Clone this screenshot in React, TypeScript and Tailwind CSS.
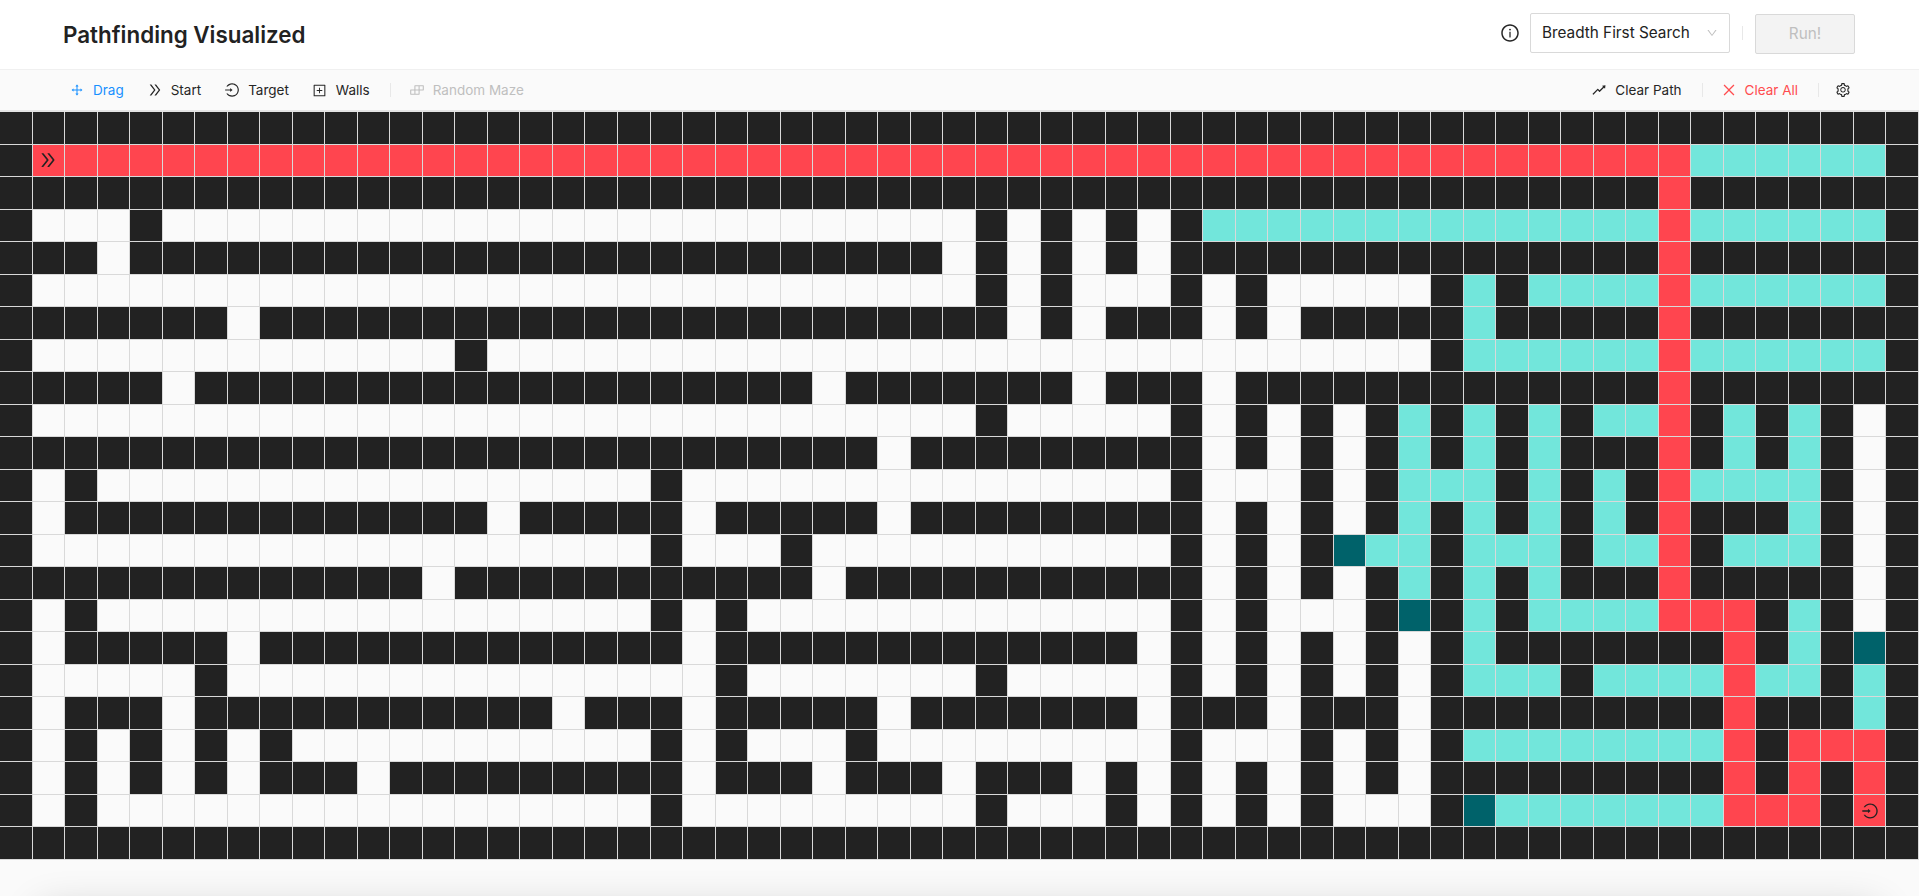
import type { ReactNode } from "react";
import {
  AiOutlineBuild,
  AiOutlineClose,
  AiOutlineDoubleRight,
  AiOutlineDown,
  AiOutlineDrag,
  AiOutlineInfoCircle,
  AiOutlineLogin,
  AiOutlinePlusSquare,
  AiOutlineRise,
  AiOutlineSetting,
} from "react-icons/ai";

// run-length rows: # wall, . empty, r path, t visited, d frontier, S start, E target
const maze = [
  "#59",
  "#1 S1 r50 t6 #1",
  "#51 r1 #7",
  "#1 .3 #1 .25 #1 .1 #1 .1 #1 .1 #1 t14 r1 t6 #1",
  "#3 .1 #25 .1 #1 .1 #1 .1 #1 .1 #15 r1 #7",
  "#1 .29 #1 .1 #1 .3 #1 .1 #1 .5 #1 t1 #1 t4 r1 t6 #1",
  "#7 .1 #23 .1 #1 .1 #3 .1 #1 .1 #5 t1 #5 r1 #7",
  "#1 .13 #1 .29 #1 t6 r1 t6 #1",
  "#5 .1 #19 .1 #7 .1 #3 .1 #13 r1 #7",
  "#1 .29 #1 .5 #1 .1 #1 .1 #1 .1 #1 t1 #1 t1 #1 t1 #1 t2 r1 #1 t1 #1 t1 #1 .1 #1",
  "#27 .1 #9 .1 #1 .1 #1 .1 #1 t1 #1 t1 #1 t1 #3 r1 #1 t1 #1 t1 #1 .1 #1",
  "#1 .1 #1 .17 #1 .15 #1 .3 #1 .1 #1 t3 #1 t1 #1 t1 #1 r1 t4 #1 .1 #1",
  "#1 .1 #13 .1 #5 .1 #5 .1 #9 .1 #1 .1 #1 .1 #1 t1 #1 t1 #1 t1 #1 t1 #1 r1 #3 t1 #1 .1 #1",
  "#1 .19 #1 .3 #1 .11 #1 .1 #1 .1 #1 d1 t2 #1 t3 #1 t2 r1 #1 t3 #1 .1 #1",
  "#13 .1 #11 .1 #11 .1 #1 .1 #1 .1 #1 t1 #1 t1 #1 t1 #3 r1 #5 .1 #1",
  "#1 .1 #1 .17 #1 .1 #1 .13 #1 .1 #1 .3 #1 d1 #1 t1 #1 t4 r3 #1 t1 #1 .1 #1",
  "#1 .1 #5 .1 #13 .1 #13 .1 #1 .1 #1 .1 #1 .1 #1 .1 #1 t1 #7 r1 #1 t1 #1 d1 #1",
  "#1 .5 #1 .15 #1 .7 #1 .5 #1 .1 #1 .1 #1 .1 #1 .1 #1 t3 #1 t4 r1 t2 #1 t1 #1",
  "#1 .1 #3 .1 #11 .1 #3 .1 #5 .1 #7 .1 #3 .1 #3 .1 #9 r1 #3 t1 #1",
  "#1 .1 #1 .1 #1 .1 #1 .1 #1 .11 #1 .1 #1 .3 #1 .9 #1 .3 #1 .1 #1 .1 #1 t8 r1 #1 r3 #1",
  "#1 .1 #1 .1 #1 .1 #1 .1 #3 .1 #9 .1 #3 .1 #3 .1 #3 .1 #1 .1 #1 .1 #1 .1 #1 .1 #1 .1 #9 r1 #1 r1 #1 r1 #1",
  "#1 .1 #1 .17 #1 .9 #1 .3 #1 .1 #1 .1 #1 .1 #1 .3 #1 d1 t7 r3 #1 E1 #1",
  "#59",
];

const cells = maze.flatMap((row) =>
  row.split(" ").flatMap((run) => Array<string>(Number(run.slice(1))).fill(run[0]))
);

const cellColor: Record<string, string> = {
  "#": "bg-[#222222]",
  ".": "bg-[#fafafa]",
  r: "bg-[#ff454f]",
  t: "bg-[#72e6db]",
  d: "bg-[#00626a]",
  S: "bg-[#ff454f]",
  E: "bg-[#ff454f]",
};

function Tool({
  icon,
  label,
  className,
}: {
  icon: ReactNode;
  label: string;
  className?: string;
}) {
  return (
    <div className={`flex items-center gap-[8px] text-[13.5px] ${className ?? "text-[#262626]"}`}>
      <span className="w-[16px] flex justify-center text-[16px]">{icon}</span>
      <span>{label}</span>
    </div>
  );
}

function Divider({ className }: { className: string }) {
  return <div className={`w-px h-[14px] bg-[#e8e8e8] ${className}`} />;
}

export default function App() {
  return (
    <div className="h-[896px] overflow-hidden bg-[#fafafa] font-['Inter',sans-serif] text-[#222222]">
      <header className="h-[70px] bg-white flex items-center pl-[63px] pr-[64px] border-b border-[#f0f0f0]">
        <h1 className="text-[22.4px] font-semibold">Pathfinding Visualized</h1>
        <div className="ml-auto mb-[3px] flex items-center">
          <AiOutlineInfoCircle className="text-[20px] text-[#262626] mr-[10px]" />
          <div className="w-[200px] h-[40px] flex items-center justify-between px-[11px] bg-white border border-[#d9d9d9] rounded-[2px] text-[15.3px]">
            <span>Breadth First Search</span>
            <AiOutlineDown className="text-[12px] text-[#bfbfbf]" />
          </div>
          <div className="w-px h-[14px] bg-[#e8e8e8] mx-[12px]" />
          <button className="w-[100px] h-[40px] mt-[2px] bg-[#f3f3f3] border border-[#d9d9d9] rounded-[2px] text-[15.3px] text-[#bfbfbf]">
            Run!
          </button>
        </div>
      </header>

      <nav className="h-[42px] flex items-center pl-[69px] pr-[68px] bg-[#fafafa] border-b-2 border-[#e4e4e4]">
        <Tool icon={<AiOutlineDrag className="text-[14px]" />} label="Drag" className="text-[#1890ff]" />
        <Tool icon={<AiOutlineDoubleRight />} label="Start" className="text-[#262626] ml-[23px]" />
        <Tool icon={<AiOutlineLogin />} label="Target" className="text-[#262626] ml-[23px]" />
        <Tool icon={<AiOutlinePlusSquare className="text-[15px]" />} label="Walls" className="text-[#262626] ml-[23px]" />
        <Divider className="ml-[20px]" />
        <Tool icon={<AiOutlineBuild />} label="Random Maze" className="text-[#bfbfbf] ml-[18px]" />
        <div className="ml-auto flex items-center">
          <Tool icon={<AiOutlineRise />} label="Clear Path" />
          <Divider className="ml-[20px]" />
          <Tool icon={<AiOutlineClose />} label="Clear All" className="text-[#ff4d4f] ml-[18px]" />
          <Divider className="ml-[20px]" />
          <AiOutlineSetting className="text-[16px] text-[#262626] ml-[16px]" />
        </div>
      </nav>

      <div className="grid grid-cols-[repeat(59,1fr)] auto-rows-[32.52px]">
        {cells.map((kind, i) => (
          <div
            key={i}
            className={`flex items-center justify-center border-r border-b border-[#d9d9d9] ${cellColor[kind]}`}
          >
            {kind === "S" && <AiOutlineDoubleRight className="text-[20px] text-[#222222]" />}
            {kind === "E" && <AiOutlineLogin className="text-[18px] text-[#222222]" />}
          </div>
        ))}
      </div>

      <div className="relative h-[36px] overflow-hidden">
        <div className="absolute left-[40px] right-[40px] top-[50px] h-[40px] shadow-[0_0_40px_rgba(0,0,0,0.2)]" />
      </div>
    </div>
  );
}
